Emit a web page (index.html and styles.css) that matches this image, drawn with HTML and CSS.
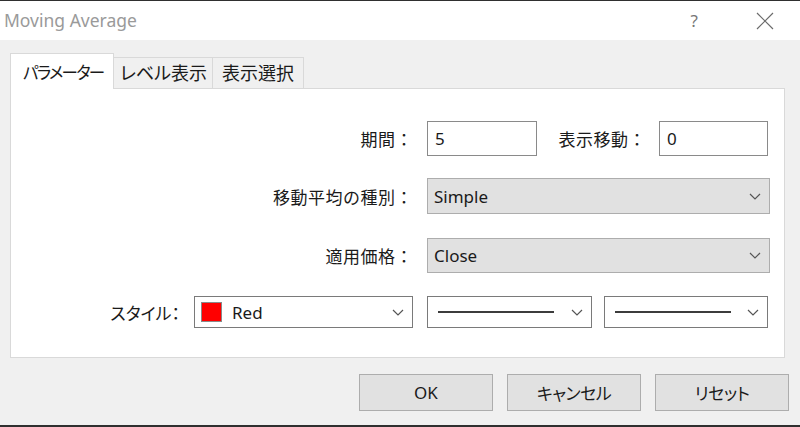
FILE: index.html
```html
<!DOCTYPE html>
<html lang="ja">
<head>
<meta charset="utf-8">
<title>Moving Average</title>
<link rel="stylesheet" href="styles.css">
</head>
<body>
<div class="window">
  <div class="titlebar">
    <span class="title">Moving Average</span>
    <span class="help">?</span>
    <svg class="close" width="18" height="18" viewBox="0 0 18 18"><path d="M1 1 L17 17 M17 1 L1 17" stroke="#6b6b6b" stroke-width="1.2" fill="none"/></svg>
  </div>
  <div class="content">
    <div class="tabs">
      <div class="tab active">パラメーター</div>
      <div class="tab">レベル表示</div>
      <div class="tab">表示選択</div>
    </div>
    <div class="panel">
      <div class="row row1">
        <label class="lbl lbl-main">期間：</label>
        <div class="input w110">5</div>
        <label class="lbl lbl-shift">表示移動：</label>
        <div class="input w109">0</div>
      </div>
      <div class="row row2">
        <label class="lbl lbl-main">移動平均の種別：</label>
        <div class="combo gray w343"><span>Simple</span><svg class="chev" width="12" height="7" viewBox="0 0 12 7"><path d="M1 1 L6 6 L11 1" stroke="#555" stroke-width="1.2" fill="none"/></svg></div>
      </div>
      <div class="row row3">
        <label class="lbl lbl-main">適用価格：</label>
        <div class="combo gray w343"><span>Close</span><svg class="chev" width="12" height="7" viewBox="0 0 12 7"><path d="M1 1 L6 6 L11 1" stroke="#555" stroke-width="1.2" fill="none"/></svg></div>
      </div>
      <div class="row row4">
        <label class="lbl lbl-style">スタイル：</label>
        <div class="combo white w219"><span class="swatch"></span><span class="red-text">Red</span><svg class="chev" width="12" height="7" viewBox="0 0 12 7"><path d="M1 1 L6 6 L11 1" stroke="#555" stroke-width="1.2" fill="none"/></svg></div>
        <div class="combo white w165 line-combo"><span class="line"></span><svg class="chev" width="12" height="7" viewBox="0 0 12 7"><path d="M1 1 L6 6 L11 1" stroke="#555" stroke-width="1.2" fill="none"/></svg></div>
        <div class="combo white w164 line-combo"><span class="line"></span><svg class="chev" width="12" height="7" viewBox="0 0 12 7"><path d="M1 1 L6 6 L11 1" stroke="#555" stroke-width="1.2" fill="none"/></svg></div>
      </div>
    </div>
    <div class="buttons">
      <button class="btn">OK</button>
      <button class="btn jp">キャンセル</button>
      <button class="btn jp">リセット</button>
    </div>
  </div>
</div>
</body>
</html>
```
FILE: styles.css
```css
* { box-sizing: border-box; }
html, body { margin: 0; padding: 0; }
body {
  width: 800px;
  height: 427px;
  overflow: hidden;
  font-family: "Noto Sans", "Noto Sans CJK JP", sans-serif;
  color: #1a1a1a;
  background: #f0f0f0;
}
.window {
  width: 800px;
  height: 427px;
  border-top: 1px solid #2f2f2f;
  border-bottom: 2px solid #2f2f2f;
  display: flex;
  flex-direction: column;
  background: #f0f0f0;
}
.titlebar {
  height: 39px;
  background: #ffffff;
  display: flex;
  align-items: center;
  padding-left: 4px;
  flex-shrink: 0;
}
.title {
  font-size: 17.5px;
  color: #9a9a9a;
  flex: 1;
  margin-top: -1px;
}
.help {
  font-size: 17px;
  color: #777;
  margin-right: 58px;
}
.close {
  margin-right: 26px;
}
.content {
  flex: 1;
  padding: 13px 12px 0 10px;
  display: flex;
  flex-direction: column;
}
.tabs {
  display: flex;
  align-items: flex-end;
  height: 35px;
  position: relative;
  z-index: 1;
}
.tab {
  font-family: "Noto Sans CJK JP", sans-serif;
  font-size: 18px;
  font-feature-settings: "palt";
  white-space: nowrap;
  overflow: hidden;
  height: 31px;
  line-height: 29px;
  border: 1px solid #d9d9d9;
  border-bottom: none;
  background: #f0f0f0;
  padding: 0 0 0 6px;
  margin-left: -1px;
}
.tab:nth-child(2) { width: 100px; }
.tab:nth-child(3) { width: 92px; padding-left: 9px; }
.tab.active {
  font-size: 16.5px;
  letter-spacing: -1.7px;
  height: 36px;
  margin-bottom: -1px;
  margin-left: 0;
  width: 104px;
  background: #fff;
  padding-left: 12px;
  line-height: 36px;
}
.panel {
  width: 775px;
  height: 270px;
  background: #fff;
  border: 1px solid #d9d9d9;
  padding-top: 32px;
}
.row {
  display: flex;
  align-items: center;
}
.row2 { margin-top: 22px; }
.row3 { margin-top: 24px; }
.row4 { margin-top: 23px; }
.lbl {
  font-family: "Noto Sans CJK JP", sans-serif;
  font-size: 17px;
  text-align: right;
  white-space: nowrap;
  letter-spacing: 0.5px;
}
.lbl-main { width: 402px; margin-right: 14px; }
.lbl-shift { width: 109px; margin-right: 13px; }
.lbl-style {
  width: 169px;
  margin-right: 14px;
  font-feature-settings: "palt";
  letter-spacing: 0;
}
.input {
  height: 35px;
  border: 1px solid #8a8a8a;
  background: #fff;
  font-size: 17px;
  padding-left: 7px;
  display: flex;
  align-items: center;
}
.w110 { width: 110px; }
.w109 { width: 109px; }
.w343 { width: 343px; }
.w219 { width: 219px; margin-right: 14px; }
.w165 { width: 165px; margin-right: 12px; }
.w164 { width: 164px; }
.combo {
  display: flex;
  align-items: center;
  font-size: 17px;
  padding-left: 6px;
  padding-right: 8px;
}
.combo > span:first-child { flex: none; }
.combo .chev { margin-left: auto; }
.combo.gray {
  height: 36px;
  background: #e1e1e1;
  border: 1px solid #adadad;
}
.row3 .combo.gray { height: 35px; }
.combo.white {
  height: 32px;
  background: #fff;
  border: 1px solid #7a7a7a;
}
.swatch {
  width: 21px;
  height: 20px;
  background: #ff0000;
  border: 1px solid #8a8a8a;
  margin-right: 10px;
}
.line-combo { padding-left: 10px; }
.line {
  width: 116px;
  height: 2px;
  background: #3c3c3c;
}
.buttons {
  display: flex;
  justify-content: flex-end;
  gap: 14px;
  margin-top: 16px;
  margin-right: -1px;
}
.btn {
  width: 134px;
  height: 37px;
  background: #e1e1e1;
  border: 1px solid #adadad;
  font-family: "Noto Sans", "Noto Sans CJK JP", sans-serif;
  font-size: 17px;
  color: #1a1a1a;
  padding: 0;
}
.btn.jp {
  font-family: "Noto Sans CJK JP", sans-serif;
  font-feature-settings: "palt";
  letter-spacing: -0.5px;
}
```
